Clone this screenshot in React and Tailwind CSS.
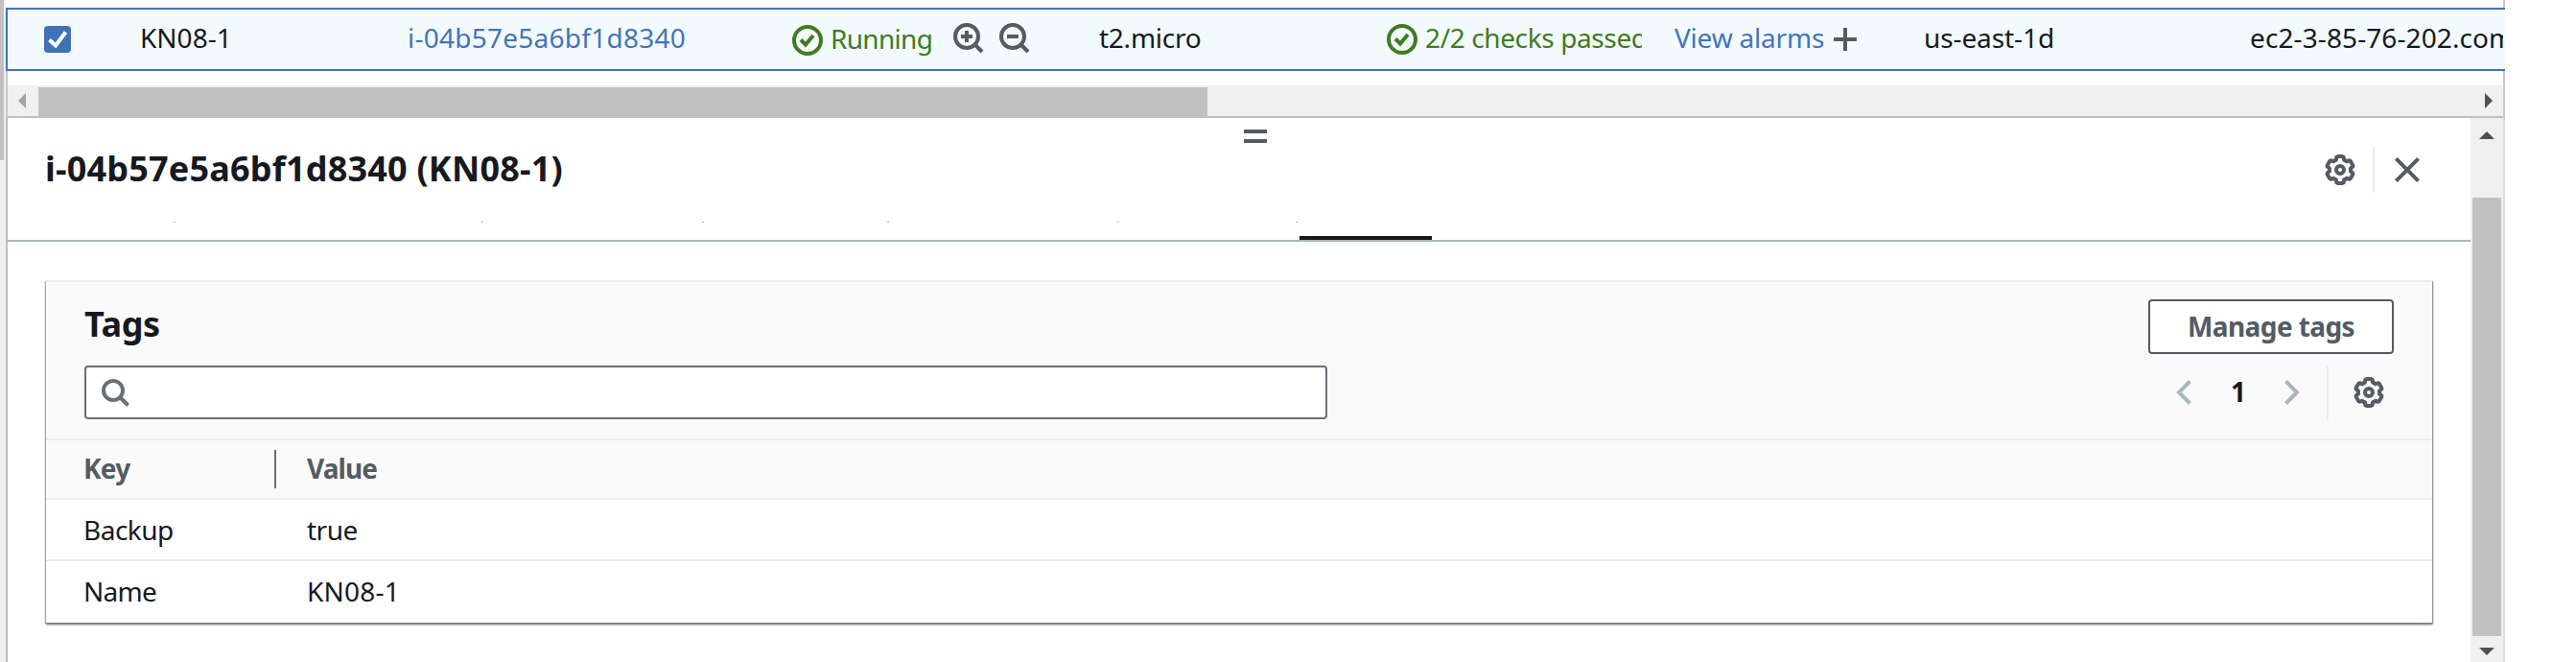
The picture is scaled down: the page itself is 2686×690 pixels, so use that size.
const GEAR_POINTS = Array.from({ length: 6 }, (_, k) => {
  const base = -90 + k * 60;
  return [
    [base - 15, 13.9],
    [base - 9, 14.1],
    [base + 9, 14.1],
    [base + 15, 13.9],
    [base + 22, 11],
    [base + 30, 11.3],
    [base + 38, 11],
  ];
})
  .flat()
  .map(([deg, r]) => {
    const a = (deg * Math.PI) / 180;
    return `${(16 + r * Math.cos(a)).toFixed(2)},${(16 + r * Math.sin(a)).toFixed(2)}`;
  })
  .join(" ");

function Gear() {
  return (
    <svg className="h-8 w-8 shrink-0 overflow-visible" viewBox="0 0 32 32" fill="none" stroke="#545b64" strokeWidth="4" strokeLinejoin="round">
      <polygon points={GEAR_POINTS} />
      <circle cx="16" cy="16" r="4" />
    </svg>
  );
}

function StatusIcon() {
  return (
    <svg className="h-8 w-8 shrink-0" viewBox="0 0 32 32" fill="none" stroke="#417a22" strokeWidth="4">
      <circle cx="16" cy="16" r="14" />
      <path d="M9 15.5 L14 20.5 L22 11" />
    </svg>
  );
}

function Magnifier({ plus }) {
  return (
    <svg className="h-8 w-8 shrink-0" viewBox="0 0 32 32" fill="none" stroke="#545b64" strokeWidth="4">
      <circle cx="14" cy="14" r="12" />
      <path d="M22.5 22.5 L30 30" />
      <path d="M8 14 H20" />
      {plus && <path d="M14 8 V20" />}
    </svg>
  );
}

function InstanceRow() {
  return (
    <div className="flex h-[66px] items-center overflow-hidden whitespace-nowrap border-y-2 border-l-2 border-[#4172b8] bg-[#f2fafd]">
      <div className="flex w-[138px] shrink-0 pl-[38px]">
        <div className="flex h-7 w-7 items-center justify-center rounded-[4px] bg-[#4172b8]">
          <svg className="h-7 w-7" viewBox="0 0 28 28" fill="none" stroke="#fff" strokeWidth="4">
            <path d="M5.5 14.5 L12 20.5 L22.5 6.5" />
          </svg>
        </div>
      </div>
      <div className="w-[279px] shrink-0 pb-1">KN08-1</div>
      <div className="w-[401px] shrink-0 pb-1 tracking-[0.25px] text-[#4474b9]">i-04b57e5a6bf1d8340</div>
      <div className="flex w-[320px] shrink-0 items-center">
        <div className="pt-0.5">
          <StatusIcon />
        </div>
        <div className="w-[129px] pb-0.5 pl-2 tracking-[-0.7px] text-[#417a22]">Running</div>
        <div className="flex gap-4 pb-0.5 pl-[7px]">
          <Magnifier plus />
          <Magnifier />
        </div>
      </div>
      <div className="w-[300px] shrink-0 pb-1 tracking-[-0.25px]">t2.micro</div>
      <div className="flex w-[300px] shrink-0 items-center">
        <StatusIcon />
        <div className="ml-2 w-[226px] overflow-hidden pb-1 tracking-[-0.38px] text-[#417a22]">2/2 checks passed</div>
      </div>
      <div className="flex w-[260px] shrink-0 items-center">
        <div className="w-[166px] pb-1 tracking-[-0.2px] text-[#4474b9]">View alarms</div>
        <svg className="h-6 w-6" viewBox="0 0 24 24" stroke="#545b64" strokeWidth="4">
          <path d="M12 0 V24 M0 12 H24" />
        </svg>
      </div>
      <div className="w-[340px] shrink-0 pb-1 tracking-[-0.1px]">us-east-1d</div>
      <div className="w-[264px] shrink-0 overflow-hidden pb-1 tracking-[0.1px]">ec2-3-85-76-202.compute</div>
    </div>
  );
}

function HorizontalScrollbar() {
  return (
    <div className="mt-[15px] flex h-[34px] items-center border-b-2 border-[#bcc3c4] bg-[#f0f0f0]">
      <svg className="ml-[11px] h-4 w-2" viewBox="0 0 8 16" fill="#a3a3a3">
        <path d="M8 0 V16 L0 8 Z" />
      </svg>
      <div className="ml-[13px] mt-0.5 h-[30px] w-[1219px] bg-[#c1c1c1]" />
      <svg className="ml-auto mr-[11px] h-4 w-2" viewBox="0 0 8 16" fill="#505050">
        <path d="M0 0 V16 L8 8 Z" />
      </svg>
    </div>
  );
}

function VerticalScrollbar() {
  return (
    <div className="flex w-9 shrink-0 flex-col items-center border-r-2 border-[#dcdcdc] bg-[#f0f0f0]">
      <svg className="mt-3.5 h-2 w-4" viewBox="0 0 16 8" fill="#505050">
        <path d="M8 0 L16 8 H0 Z" />
      </svg>
      <div className="mt-[61px] h-[457px] w-[30px] bg-[#c1c1c1]" />
      <svg className="mt-3 h-2 w-4" viewBox="0 0 16 8" fill="#505050">
        <path d="M0 0 H16 L8 8 Z" />
      </svg>
    </div>
  );
}

const TAB_WIDTHS = ["w-[175px]", "w-[321px]", "w-[230px]", "w-[193px]", "w-[240px]", "w-[186px]"];

function PanelHeader() {
  return (
    <div className="h-[129px] border-b-2 border-[#aab7b8]">
      <div className="ml-[1289px] flex flex-col gap-1.5 pt-3">
        <div className="h-1 w-6 bg-[#545b64]" />
        <div className="h-1 w-6 bg-[#545b64]" />
      </div>
      <div className="mt-1 flex h-12 items-center pl-[39px] pr-[53px]">
        <h1 className="pb-0.5 text-[36px] font-bold leading-[48px] tracking-[0.2px]">i-04b57e5a6bf1d8340 (KN08-1)</h1>
        <div className="ml-auto flex h-12 items-center">
          <Gear />
          <div className="ml-[18px] h-12 w-0.5 bg-[#eaeded]" />
          <svg className="ml-[21px] h-[26px] w-[26px]" viewBox="0 0 26 26" stroke="#545b64" strokeWidth="4">
            <path d="M1.4 1.4 L24.6 24.6 M24.6 1.4 L1.4 24.6" />
          </svg>
        </div>
      </div>
      <div className="mt-[30px] flex h-[19px]">
        {TAB_WIDTHS.map((w, i) => (
          <div key={i} className={`flex shrink-0 justify-end ${w}`}>
            <div className="h-px w-0.5 bg-[#aab7b8]" />
          </div>
        ))}
        <div className="ml-0.5 h-1 w-[138px] self-end bg-[#16191f]" />
      </div>
    </div>
  );
}

function TagsCard() {
  return (
    <div className="ml-10 mt-10 w-[2488px] border-t-2 border-[#eaeded] bg-white shadow-[0_2px_2px_0_#6f7b80,1px_2px_2px_0_#00070c26,-1px_1px_1px_0_#b4bcbe,1px_1px_1px_0_#b4bcbe]">
      <div className="h-[165px] border-b-2 border-[#eaeded] bg-[#fafafa] px-10 pt-[18px]">
        <div className="flex h-[57px] items-center">
          <h2 className="pb-1.5 text-[36px] font-bold leading-[48px] tracking-[-0.4px]">Tags</h2>
          <button className="ml-auto h-[57px] w-64 rounded-[4px] border-2 border-[#545b64] bg-white pb-0.5 font-bold tracking-[-0.6px] text-[#545b64]">Manage tags</button>
        </div>
        <div className="mt-3 flex h-14 items-center">
          <div className="flex h-14 w-[1296px] items-center rounded-[4px] border-2 border-[#687078] bg-white pl-4">
            <svg className="h-[29px] w-[29px]" viewBox="0 0 29 29" fill="none" stroke="#687078" strokeWidth="4">
              <circle cx="12" cy="12" r="10" />
              <path d="M19 19 L27.5 27.5" />
            </svg>
          </div>
          <div className="ml-auto mr-2.5 flex h-14 items-center">
            <svg className="h-[26px] w-4" viewBox="0 0 16 26" fill="none" stroke="#aab7b8" strokeWidth="4">
              <path d="M14.5 1.5 L3 13 L14.5 24.5" />
            </svg>
            <div className="w-[97px] pb-[3px] pl-px text-center font-bold">1</div>
            <svg className="h-[26px] w-4" viewBox="0 0 16 26" fill="none" stroke="#aab7b8" strokeWidth="4">
              <path d="M1.5 1.5 L13 13 L1.5 24.5" />
            </svg>
            <div className="ml-7 mr-[26px] h-14 w-0.5 bg-[#eaeded]" />
            <Gear />
          </div>
        </div>
      </div>
      <div className="flex h-[62px] items-center border-b-2 border-[#eaeded] bg-[#fafafa] pl-[39px] font-bold text-[#545b64]">
        <div className="flex h-10 w-[201px] items-center justify-between border-r-2 border-[#687078]">
          <span className="pb-0.5 tracking-[-0.8px]">Key</span>
        </div>
        <span className="pb-0.5 pl-8 tracking-[-0.9px]">Value</span>
      </div>
      <div className="flex h-16 items-center border-b-2 border-[#eaeded] pb-px pl-[39px] tracking-[-0.5px]">
        <div className="w-[233px]">Backup</div>
        <div>true</div>
      </div>
      <div className="flex h-16 items-center pb-[3px] pl-[39px]">
        <div className="w-[233px] tracking-[-0.7px]">Name</div>
        <div className="tracking-[0.2px]">KN08-1</div>
      </div>
    </div>
  );
}

export default function App() {
  return (
    <div className="flex h-[690px] w-[2686px] overflow-hidden bg-white font-['Noto_Sans',sans-serif] text-[28px] leading-10 text-[#16191f]">
      <div className="w-1.5 shrink-0 bg-[#f0f0f0]">
        <div className="h-[167px] w-1 bg-[#c1c1c1]" />
      </div>
      <div className="flex w-[2606px] shrink-0 flex-col">
        <div className="h-2 shrink-0 border-r-2 border-[#c4cacb]" />
        <InstanceRow />
        <div className="border-x-2 border-[#c4cacb]">
          <HorizontalScrollbar />
        </div>
        <div className="flex grow">
          <div className="w-0.5 shrink-0 bg-[#b9bdbe]" />
          <div className="grow">
            <PanelHeader />
            <TagsCard />
          </div>
          <VerticalScrollbar />
        </div>
      </div>
    </div>
  );
}
